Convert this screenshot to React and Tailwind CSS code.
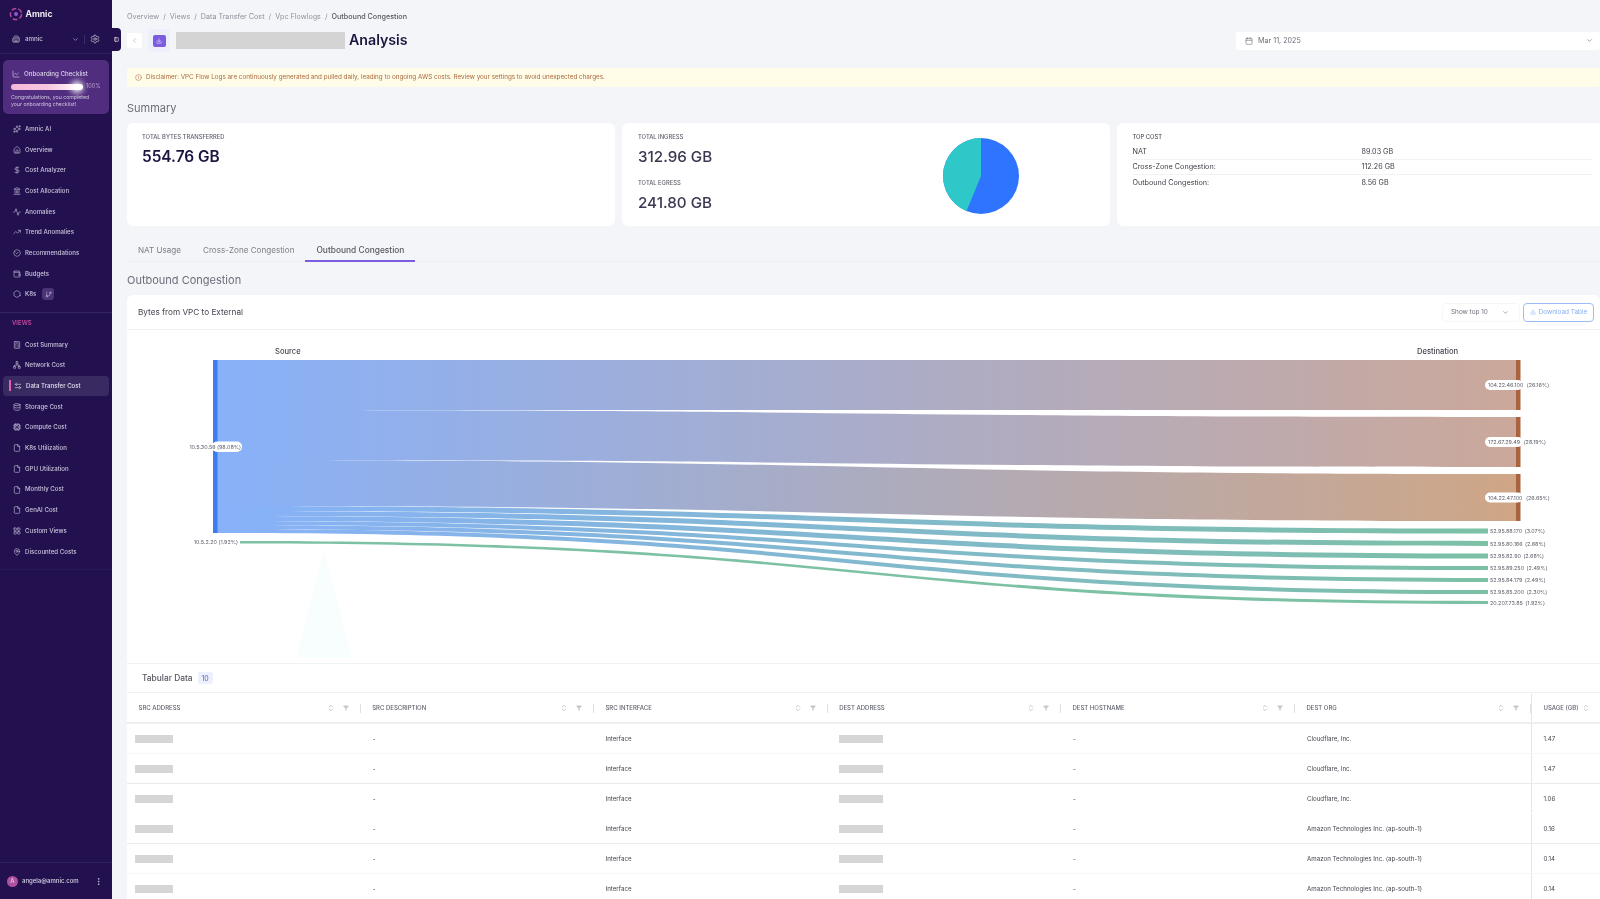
import React from 'react';
import {
  Sparkles, House, DollarSign, Landmark, Activity, TrendingUp, BadgeCheck, Wallet, Hexagon,
  Calculator, Network, ArrowLeftRight, Database, Cpu, File, LayoutGrid, MapPin, Settings,
  Building2, ChevronDown, ChevronLeft, ChevronsUpDown, Filter, Calendar, Download, CircleAlert,
  EllipsisVertical, PanelLeft, GitBranch, LineChart,
} from 'lucide-react';

const mainNav = [
  { label: 'Amnic AI', icon: Sparkles },
  { label: 'Overview', icon: House },
  { label: 'Cost Analyzer', icon: DollarSign },
  { label: 'Cost Allocation', icon: Landmark },
  { label: 'Anomalies', icon: Activity },
  { label: 'Trend Anomalies', icon: TrendingUp },
  { label: 'Recommendations', icon: BadgeCheck },
  { label: 'Budgets', icon: Wallet },
  { label: 'K8s', icon: Hexagon, badge: true },
];

const viewsNav = [
  { label: 'Cost Summary', icon: Calculator },
  { label: 'Network Cost', icon: Network },
  { label: 'Data Transfer Cost', icon: ArrowLeftRight, active: true },
  { label: 'Storage Cost', icon: Database },
  { label: 'Compute Cost', icon: Cpu },
  { label: 'K8s Utilization', icon: File },
  { label: 'GPU Utilization', icon: File },
  { label: 'Monthly Cost', icon: File },
  { label: 'GenAI Cost', icon: File },
  { label: 'Custom Views', icon: LayoutGrid },
  { label: 'Discounted Costs', icon: MapPin },
];

const columns = ['SRC ADDRESS', 'SRC DESCRIPTION', 'SRC INTERFACE', 'DEST ADDRESS', 'DEST HOSTNAME', 'DEST ORG'];

const rows = [
  { org: 'Cloudflare, Inc.', usage: '1.47', line: 'border-[#f5f6f7]' },
  { org: 'Cloudflare, Inc.', usage: '1.47', line: 'border-[#e8eaed]' },
  { org: 'Cloudflare, Inc.', usage: '1.06', line: 'border-transparent' },
  { org: 'Amazon Technologies Inc. (ap-south-1)', usage: '0.16', line: 'border-[#e8eaed]' },
  { org: 'Amazon Technologies Inc. (ap-south-1)', usage: '0.14', line: 'border-[#f5f6f7]' },
  { org: 'Amazon Technologies Inc. (ap-south-1)', usage: '0.14', line: 'border-transparent' },
];

// y0a/y0b at the source side, y1a/y1b at the destination side
const bigLinks = [
  { y0a: 360, y0b: 410, y1a: 360, y1b: 410, grad: 'toBrown' },
  { y0a: 410, y0b: 460, y1a: 417, y1b: 467, grad: 'toBrown' },
  { y0a: 460, y0b: 506, y1a: 474, y1b: 521, grad: 'toTan' },
];

const greenLinks = [
  { y0a: 506, y0b: 511, y1a: 528.5, y1b: 533.5 },
  { y0a: 511, y0b: 516, y1a: 541, y1b: 546 },
  { y0a: 516, y0b: 521, y1a: 553.5, y1b: 558.5 },
  { y0a: 521, y0b: 525, y1a: 566, y1b: 570 },
  { y0a: 525, y0b: 529, y1a: 578, y1b: 582 },
  { y0a: 529, y0b: 533, y1a: 590, y1b: 594 },
];

const greenLabels = [
  { text: '52.95.88.170', pct: '(3.07%)', y: 531 },
  { text: '52.95.80.186', pct: '(2.68%)', y: 543.5 },
  { text: '52.95.82.90', pct: '(2.68%)', y: 556 },
  { text: '52.95.89.250', pct: '(2.49%)', y: 568 },
  { text: '52.95.84.179', pct: '(2.49%)', y: 580 },
  { text: '52.95.85.200', pct: '(2.30%)', y: 592 },
  { text: '20.207.73.85', pct: '(1.92%)', y: 603 },
];

const brownLabels = [
  { text: '104.22.46.100', pct: '(26.16%)', y: 385 },
  { text: '172.67.29.49', pct: '(28.19%)', y: 442 },
  { text: '104.22.47.100', pct: '(26.65%)', y: 497.5 },
];

const ribbon = (x0, x1, l) => {
  const xm = (x0 + x1) / 2;
  return `M${x0} ${l.y0a}C${xm} ${l.y0a} ${xm} ${l.y1a} ${x1} ${l.y1a}L${x1} ${l.y1b}C${xm} ${l.y1b} ${xm} ${l.y0b} ${x0} ${l.y0b}Z`;
};

const NavItem = ({ item }) => {
  const Icon = item.icon;
  return (
    <div className={`relative flex h-[20.7px] items-center gap-[4.5px] pl-[12.5px] ${item.active ? 'text-[#e4dff0]' : 'text-[#cbc4dd]'}`}>
      {item.active && <div className="absolute inset-x-[3px] top-[0.5px] bottom-[0.5px] rounded-[4px] bg-[#392a62]" />}
      {item.active && <div className="absolute left-[9px] top-[4.5px] h-[11px] w-[1.5px] bg-[#e05fb0]" />}
      <Icon size={8} strokeWidth={1.8} className={`relative ${item.active ? 'ml-[1px]' : ''}`} />
      <span className="relative text-[6.1px] font-medium leading-none whitespace-nowrap">{item.label}</span>
      {item.badge && (
        <span className="relative ml-[1.5px] flex h-[12px] w-[12px] items-center justify-center rounded-[3px] bg-[#4a3377]">
          <GitBranch size={7} strokeWidth={1.8} />
        </span>
      )}
    </div>
  );
};

const Sidebar = () => (
  <aside className="relative flex h-full w-[112px] shrink-0 flex-col bg-[#22114e] font-['Inter',sans-serif]">
    <div className="flex h-[28px] items-center gap-[2.5px] pl-[9px]">
      <svg width="14" height="14" viewBox="0 0 14 14" fill="none">
        <circle cx="7" cy="7" r="5.6" stroke="#b4489d" strokeWidth="1.5" strokeDasharray="5 2" />
        <circle cx="7" cy="7" r="2" fill="#8b5bd6" />
      </svg>
      <span className="text-[8.6px] font-bold leading-none text-[#efecf5]">Amnic</span>
    </div>
    <div className="flex h-[26px] items-start border-b border-[#2e1f5a] pl-[12px]">
      <div className="flex h-[22px] w-full items-center text-[#c8c2da]">
        <Building2 size={8} strokeWidth={1.8} />
        <span className="ml-[5px] text-[6.2px] font-medium leading-none">amnic</span>
        <ChevronDown size={7} strokeWidth={2} className="ml-[29px]" />
        <div className="ml-[5px] h-[9px] w-px bg-[#3c2c68]" />
        <Settings size={10} strokeWidth={1.6} className="ml-[5px] text-[#d6d1e3]" />
      </div>
    </div>

    <div className="mx-[3px] mt-[6px] h-[54px] rounded-[5px] bg-[#502d7e] px-[8px] pt-[9px]">
      <div className="flex items-center gap-[4px] pl-[1px] text-[#ddd6ea]">
        <LineChart size={8} strokeWidth={1.8} />
        <span className="text-[6.2px] font-medium leading-[10px] whitespace-nowrap">Onboarding Checklist</span>
      </div>
      <div className="mt-[5px] flex items-center gap-[3px]">
        <div className="relative h-[6px] w-[72px] rounded-full bg-gradient-to-r from-[#f3b9d8] via-[#f6c6e0] to-[#ffffff]">
          <div className="absolute right-[0px] top-[-3px] h-[12px] w-[12px] rounded-full bg-white blur-[3px]" />
        </div>
        <span className="text-[5.5px] leading-none text-[#b9a5cf]">100%</span>
      </div>
      <p className="mt-[4px] w-[86px] text-[5.2px] leading-[6.7px] text-[#cfc3de]">Congratulations, you completed your onboarding checklist!</p>
    </div>

    <nav className="mt-[4.6px]">
      {mainNav.map((item) => <NavItem key={item.label} item={item} />)}
    </nav>

    <div className="mt-[7px] border-t border-[#36265f]">
      <div className="flex h-[20px] items-center pl-[12px] text-[6px] font-semibold leading-none text-[#c8479f]">VIEWS</div>
    </div>
    <nav className="mt-[1.6px]">
      {viewsNav.map((item) => <NavItem key={item.label} item={item} />)}
    </nav>

    <div className="mt-[7px] border-t border-[#2a1a57]" />
    <div className="flex-1" />
    <div className="flex h-[37px] items-center border-t border-[#2e1f5a] pl-[7px] text-[#d8d3e6]">
      <span className="flex h-[11px] w-[11px] items-center justify-center rounded-full bg-[#b0509f] text-[6px] font-medium leading-none">A</span>
      <span className="ml-[4px] text-[6px] font-medium leading-none">angela@amnic.com</span>
      <EllipsisVertical size={9} strokeWidth={2} className="ml-[15px]" />
    </div>

    <div className="absolute left-[111px] top-[28px] z-10 flex h-[23px] w-[10px] items-center justify-center rounded-r-[4px] bg-[#22114e] text-white">
      <PanelLeft size={5} strokeWidth={2.5} />
    </div>
  </aside>
);

const Sankey = () => (
  <svg width="1473" height="333" viewBox="127 330 1473 333" className="block">
    <defs>
      <linearGradient id="toBrown" gradientUnits="userSpaceOnUse" x1="217" x2="1516" y1="0" y2="0">
        <stop offset="0" stopColor="#88b1f9" />
        <stop offset="1" stopColor="#cba89a" />
      </linearGradient>
      <linearGradient id="toTan" gradientUnits="userSpaceOnUse" x1="217" x2="1516" y1="0" y2="0">
        <stop offset="0" stopColor="#88b1f9" />
        <stop offset="1" stopColor="#cfa686" />
      </linearGradient>
      <linearGradient id="toGreen" gradientUnits="userSpaceOnUse" x1="217" x2="1488" y1="0" y2="0">
        <stop offset="0" stopColor="#88b1f9" />
        <stop offset="1" stopColor="#7cc0a5" />
      </linearGradient>
    </defs>

    <polygon points="324,551 296,658 352,658" fill="#f8fefe" />

    {bigLinks.map((l) => <path key={l.y0a} d={ribbon(217, 1516, l)} fill={`url(#${l.grad})`} />)}
    {greenLinks.map((l) => <path key={l.y0a} d={ribbon(217, 1488, l)} fill="url(#toGreen)" />)}
    <path d={ribbon(240, 1488, { y0a: 541, y0b: 543.5, y1a: 601, y1b: 604 })} fill="#7dc1a4" />

    <rect x="213" y="360" width="4.5" height="173" fill="#3b7df0" />
    <rect x="1516" y="360" width="4.5" height="50" fill="#a9633f" />
    <rect x="1516" y="417" width="4.5" height="50" fill="#a9633f" />
    <rect x="1516" y="474" width="4.5" height="47" fill="#a9633f" />

    <g fontFamily="Inter, sans-serif" fontSize="7.6" fontWeight="500" fill="#44454f">
      <text x="275" y="354">Source</text>
      <text x="1417" y="354">Destination</text>
    </g>

    <g fontFamily="Inter, sans-serif" fontSize="5.4" fill="#5c5e68">
      <rect x="212" y="441.5" width="30" height="10.5" rx="5" fill="#ffffff" />
      <text x="241" y="449" textAnchor="end">10.5.30.56 (98.08%)</text>
      <text x="238" y="544" textAnchor="end">10.5.2.20 (1.92%)</text>
      {brownLabels.map((l) => (
        <g key={l.y}>
          <rect x="1485" y={l.y - 5} width="38" height="10" rx="5" fill="#ffffff" />
          <text x="1488" y={l.y + 2}>{l.text} <tspan dx="2">{l.pct}</tspan></text>
        </g>
      ))}
      {greenLabels.map((l) => (
        <text key={l.y} x="1490" y={l.y + 2}>{l.text} <tspan dx="1">{l.pct}</tspan></text>
      ))}
    </g>
  </svg>
);

const Table = () => (
  <div className="text-[#44454f]">
    <div className="flex h-[30px] items-center gap-[5px] border-y border-[#eff1f3] pl-[15px]">
      <span className="text-[8.4px] font-medium leading-none text-[#55565f]">Tabular Data</span>
      <span className="flex h-[12px] w-[15px] items-center justify-center rounded-[2px] bg-[#eef1fd] text-[7px] leading-none text-[#5565c9]">10</span>
    </div>
    <div className="grid h-[31px] grid-cols-[233.7px_233.3px_233.7px_233.3px_234px_236px_69px] border-b-2 border-[#eceef1] pt-[1px]">
      {columns.map((col) => (
        <div key={col} className="flex items-center pl-[11.5px] text-[#a0a3ad]">
          <span className="flex-1 text-[6px] font-medium leading-none whitespace-nowrap text-[#5f616c]">{col}</span>
          <ChevronsUpDown size={8} strokeWidth={1.8} />
          <Filter size={6} strokeWidth={1.2} fill="#c4c6cd" stroke="#c4c6cd" className="ml-[8px]" />
          <div className="ml-[11px] h-[9px] w-px bg-[#dfe1e5]" />
        </div>
      ))}
      <div className="flex items-center border-l border-[#e2e5ea] pl-[11.5px] text-[#a0a3ad]">
        <span className="text-[6px] font-medium leading-none whitespace-nowrap text-[#5f616c]">USAGE (GB)</span>
        <ChevronsUpDown size={8} strokeWidth={1.8} className="ml-[4px]" />
      </div>
    </div>
    {rows.map((row, i) => (
      <div key={i} className={`grid h-[30px] grid-cols-[233.7px_233.3px_233.7px_233.3px_234px_236px_69px] border-b ${row.line} text-[6.2px] leading-none`}>
        <div className="flex items-center pl-[8px]"><div className="h-[8px] w-[38px] bg-[#d6d6d6]" /></div>
        <div className="flex items-center pl-[12px] pt-[1.5px]">-</div>
        <div className="flex items-center pl-[11.5px] pt-[1.5px]">Interface</div>
        <div className="flex items-center pl-[11.5px]"><div className="h-[8px] w-[44px] bg-[#d6d6d6]" /></div>
        <div className="flex items-center pl-[12px] pt-[1.5px]">-</div>
        <div className="flex items-center pl-[12px] pt-[1.5px]">{row.org}</div>
        <div className="flex items-center border-l border-[#e2e5ea] pl-[11.5px] pt-[1.5px]">{row.usage}</div>
      </div>
    ))}
  </div>
);

export default function App() {
  return (
    <div className="flex h-[899px] w-[1600px] overflow-hidden bg-[#f3f5f8] font-['Inter',sans-serif] blur-[0.3px]">
      <Sidebar />
      <main className="min-w-0 flex-1 overflow-hidden pl-[15px]">
        <div className="flex h-[29px] items-center gap-[4px] pt-[5px] text-[7.2px] leading-none text-[#8f929b]">
          <span>Overview</span><span>/</span><span>Views</span><span>/</span><span>Data Transfer Cost</span><span>/</span>
          <span>Vpc Flowlogs</span><span>/</span><span className="font-medium text-[#55565f]">Outbound Congestion</span>
        </div>

        <div className="flex h-[23px] w-[1473px] items-center">
          <button className="flex h-[15px] w-[15px] items-center justify-center rounded-[2px] bg-white text-[#9a9da6]">
            <ChevronLeft size={7} strokeWidth={2} />
          </button>
          <div className="ml-[6px] flex h-[23px] w-[22px] items-center justify-center rounded-[3px] bg-[#edf0fb]">
            <div className="flex h-[12px] w-[13px] items-center justify-center rounded-[2px] bg-[#7c5ce0] text-white">
              <Download size={6} strokeWidth={2} />
            </div>
          </div>
          <div className="ml-[6px] h-[17px] w-[169px] bg-[#d4d4d4]" />
          <span className="ml-[4px] text-[14.2px] font-semibold leading-none text-[#1b1540]">Analysis</span>
          <div className="ml-auto flex h-[18px] w-[364px] items-center rounded-[3px] bg-white pl-[9px] pr-[7px] text-[#6d6f79]">
            <Calendar size={8} strokeWidth={1.8} />
            <span className="ml-[5px] flex-1 text-[7.2px] leading-none">Mar 11, 2025</span>
            <ChevronDown size={7} strokeWidth={2} />
          </div>
        </div>

        <div className="mt-[16px] flex h-[19px] w-[1473px] items-center gap-[4px] rounded-[3px] bg-[#fffde8] pl-[8px] text-[#a9683f]">
          <CircleAlert size={7} strokeWidth={1.8} />
          <span className="text-[6.3px] leading-none">Disclaimer: VPC Flow Logs are continuously generated and pulled daily, leading to ongoing AWS costs. Review your settings to avoid unexpected charges.</span>
        </div>

        <h2 className="mt-[13px] text-[11px] font-normal leading-[16px] text-[#6b6e78]">Summary</h2>

        <div className="mt-[7px] grid h-[103px] w-[1480px] grid-cols-[488px_488px_488px] gap-x-[7px]">
          <div className="rounded-[6px] bg-white pl-[15px] pt-[11px]">
            <div className="text-[5.8px] font-medium leading-[6px] text-[#5f616c]">TOTAL BYTES TRANSFERRED</div>
            <div className="mt-[7px] text-[15.4px] font-semibold leading-[20px] text-[#1b1540]">554.76 GB</div>
          </div>
          <div className="flex rounded-[6px] bg-white pl-[16px] pt-[11px]">
            <div className="w-[303.5px]">
              <div className="text-[5.8px] font-medium leading-[6px] text-[#5f616c]">TOTAL INGRESS</div>
              <div className="mt-[7px] text-[15.2px] font-medium leading-[20px] text-[#3b3950]">312.96 GB</div>
              <div className="mt-[13px] text-[5.8px] font-medium leading-[6px] text-[#5f616c]">TOTAL EGRESS</div>
              <div className="mt-[7px] text-[15.2px] font-medium leading-[20px] text-[#3b3950]">241.80 GB</div>
            </div>
            <svg width="78" height="78" viewBox="942 137 78 78" className="mt-[3px]">
              <circle cx="981" cy="176" r="38" fill="#2f74ff" />
              <path d="M981 176 L981 138 A38 38 0 0 0 966.5 211.1 Z" fill="#2fc8c8" />
            </svg>
          </div>
          <div className="rounded-[6px] bg-white pl-[15.5px] pt-[11px]">
            <div className="text-[5.8px] font-medium leading-[6px] text-[#4b4d58]">TOP COST</div>
            <div className="mt-[5px] w-[459px] text-[7.2px] leading-none text-[#3f404a]">
              {[['NAT', '89.03 GB'], ['Cross-Zone Congestion:', '112.26 GB'], ['Outbound Congestion:', '8.56 GB']].map(([k, v], i) => (
                <div key={k} className={`flex h-[15px] items-center ${i < 2 ? 'border-b border-[#f1f2f4]' : ''}`}>
                  <span className="w-[229px]">{k}</span>
                  <span>{v}</span>
                </div>
              ))}
            </div>
          </div>
        </div>

        <div className="flex h-[36px] w-[1473px] items-end border-b border-[#eceef1] text-[8.1px] leading-none text-[#7b7e88]">
          <div className="flex h-[24px] items-center px-[11px] pt-[3px]">NAT Usage</div>
          <div className="flex h-[24px] items-center px-[11px] pt-[3px]">Cross-Zone Congestion</div>
          <div className="-mb-px flex h-[24px] items-center border-b-2 border-[#7c5ce0] px-[11px] pt-[3px] text-[8.4px] font-medium text-[#55565f]">Outbound Congestion</div>
        </div>

        <h2 className="mt-[10px] text-[11px] font-normal leading-[16px] text-[#6b6e78]">Outbound Congestion</h2>

        <section className="mt-[7px] w-[1473px] rounded-t-[6px] bg-white">
          <div className="flex h-[35px] items-center border-b border-[#f1f2f4] pl-[11px]">
            <span className="flex-1 text-[8.2px] leading-none text-[#44454f]">Bytes from VPC to External</span>
            <div className="flex h-[19px] w-[78px] items-center rounded-[4px] border border-[#f5f6f7] pl-[8px] pr-[10px] text-[#70727c]">
              <span className="flex-1 text-[6.4px] leading-none">Show top 10</span>
              <ChevronDown size={7} strokeWidth={2} />
            </div>
            <button className="ml-[3px] mr-[6px] flex h-[19px] w-[71px] items-center justify-center gap-[3px] rounded-[4px] border border-[#9cbdf5] text-[#86aef0]">
              <Download size={6} strokeWidth={2} />
              <span className="text-[6.4px] leading-none">Download Table</span>
            </button>
          </div>
          <Sankey />
          <Table />
        </section>
      </main>
    </div>
  );
}
